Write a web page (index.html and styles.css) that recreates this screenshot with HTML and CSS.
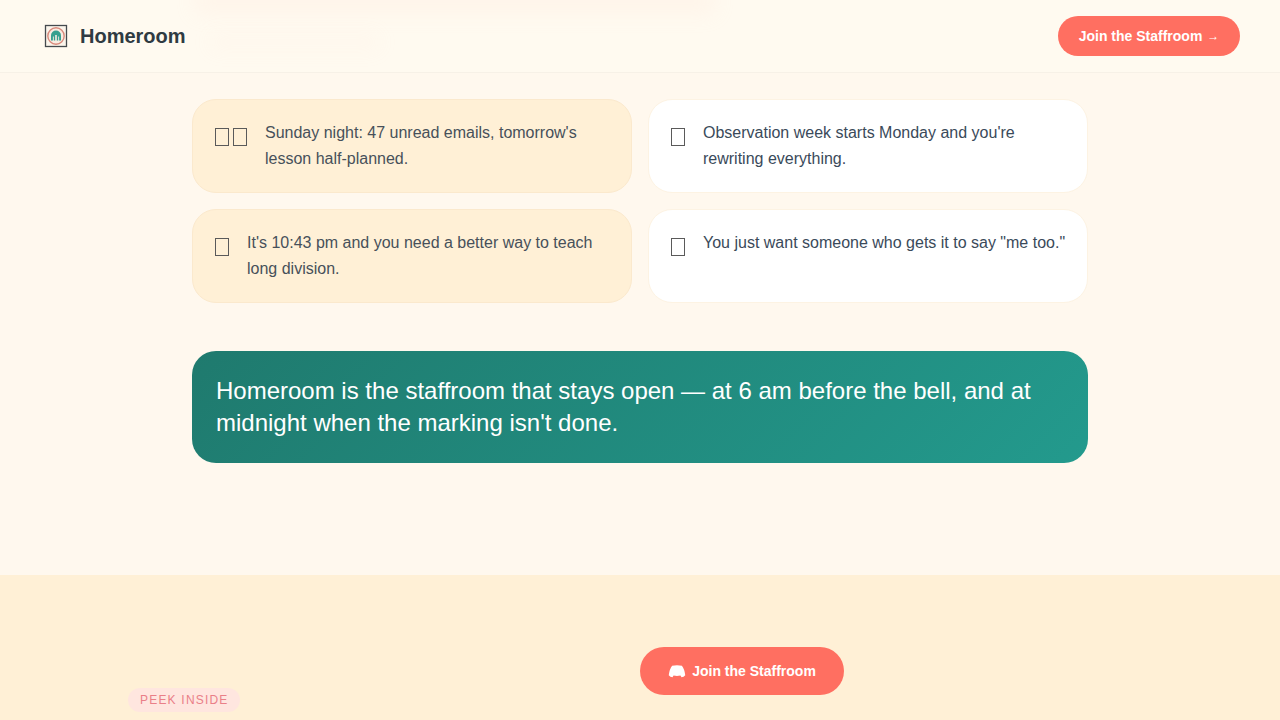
FILE: index.html
```html
<!DOCTYPE html>
<html lang="en">
<head>
    <meta charset="UTF-8">
    <meta name="viewport" content="width=device-width, initial-scale=1.0">
    <title>Homeroom</title>
    <link rel="stylesheet" href="styles.css">
</head>
<body>
    <header class="site-header">
        <div class="header-smudge smudge-top"></div>
        <div class="header-smudge smudge-low"></div>
        <a class="brand" href="#">
            <span class="brand-logo">
                <svg viewBox="0 0 24 24" width="24" height="24" aria-hidden="true">
                    <rect x="1.5" y="1.5" width="21" height="21" fill="#fbf5ec" stroke="#454a4e" stroke-width="1.3"/>
                    <circle cx="12" cy="12" r="8.2" fill="#f8ece2" stroke="#d98a7c" stroke-width="1.4"/>
                    <path d="M7 16.5V11.5a5 5 0 0 1 10 0V16.5Z" fill="#35a08f"/>
                    <path d="M11.2 17v-6h1.6v6ZM8.9 17v-4.5h.9V17ZM14.2 17v-4.5h.9V17Z" fill="#f8ece2"/>
                </svg>
            </span>
            <span class="brand-name">Homeroom</span>
        </a>
        <a class="btn btn-header" href="#">Join the Staffroom <span class="btn-arrow">→</span></a>
    </header>

    <main>
        <section class="intro">
            <div class="feelings">
                <div class="feeling feeling-warm">
                    <span class="feeling-icon"><i class="tofu"></i><i class="tofu"></i></span>
                    <p>Sunday night: 47 unread emails, tomorrow's lesson half-planned.</p>
                </div>
                <div class="feeling feeling-white">
                    <span class="feeling-icon"><i class="tofu"></i></span>
                    <p>Observation week starts Monday and you're rewriting everything.</p>
                </div>
                <div class="feeling feeling-warm">
                    <span class="feeling-icon"><i class="tofu"></i></span>
                    <p>It's 10:43 pm and you need a better way to teach long division.</p>
                </div>
                <div class="feeling feeling-white">
                    <span class="feeling-icon"><i class="tofu"></i></span>
                    <p>You just want someone who gets it to say "me too."</p>
                </div>
            </div>
            <div class="promise">
                Homeroom is the staffroom that stays open — at 6 am before the bell, and at midnight when the marking isn't done.
            </div>
        </section>

        <section class="peek">
            <div class="peek-grid">
                <div class="peek-left">
                    <span class="peek-badge">PEEK INSIDE</span>
                </div>
                <div class="peek-right">
                    <a class="btn btn-discord" href="#">
                        <svg viewBox="0 0 24 24" width="18" height="18" fill="currentColor" aria-hidden="true">
                            <path d="M5.5 5Q12 3.4 18.5 5Q21.8 9 23 17.5Q21 20 18 20.3L16.6 18Q12 19 7.4 18L6 20.3Q3 20 1 17.5Q2.2 9 5.5 5Z"/>
                        </svg>
                        Join the Staffroom
                    </a>
                </div>
            </div>
        </section>
    </main>
</body>
</html>
```

FILE: styles.css
```css
* {
    box-sizing: border-box;
}
html, body {
    height: 720px;
    overflow: hidden;
}
body {
    margin: 0;
    font-family: 'Liberation Sans', Arial, sans-serif;
    background: #fff8ee;
    color: #2d3436;
}
a {
    text-decoration: none;
}
.site-header {
    position: relative;
    height: 73px;
    padding: 0 40px;
    display: flex;
    justify-content: space-between;
    align-items: center;
    background: #fffaf0;
    border-bottom: 1px solid #f7f1e7;
    overflow: hidden;
}
.header-smudge {
    position: absolute;
    background: #ffdccf;
    filter: blur(10px);
}
.smudge-top {
    left: 195px;
    top: -12px;
    width: 520px;
    height: 26px;
    opacity: 0.18;
}
.smudge-low {
    left: 210px;
    top: 34px;
    width: 170px;
    height: 16px;
    opacity: 0.1;
}
.brand {
    position: relative;
    display: flex;
    align-items: center;
    gap: 8px;
    color: #2f3b42;
}
.brand-logo {
    width: 32px;
    height: 32px;
    display: flex;
    align-items: center;
    justify-content: center;
}
.brand-name {
    font-size: 20px;
    font-weight: 700;
}
.btn {
    position: relative;
    display: inline-flex;
    align-items: center;
    justify-content: center;
    border-radius: 999px;
    background: #ff6f61;
    color: #fff;
    font-weight: 700;
}
.btn-header {
    width: 182px;
    height: 40px;
    font-size: 14px;
    gap: 5px;
}
.btn-arrow {
    font-size: 12px;
    font-weight: 400;
}
.intro {
    height: 502px;
    padding-top: 26px;
}
.feelings {
    width: 896px;
    margin: 0 auto;
    display: grid;
    grid-template-columns: 1fr 1fr;
    gap: 16px;
}
.feeling {
    display: flex;
    gap: 16px;
    padding: 20px;
    border-radius: 24px;
    height: 94px;
}
.feeling p {
    margin: 0;
    font-size: 16px;
    line-height: 26px;
}
.feeling-warm {
    background: #fff0d6;
    border: 1px solid #fbe9cd;
}
.feeling-warm p {
    color: #47505a;
}
.feeling-white {
    background: #fff;
    border: 1px solid #fdf3e3;
}
.feeling-white p {
    color: #3a4a5a;
}
.feeling-icon {
    display: flex;
    flex-shrink: 0;
    padding-top: 8px;
}
.tofu {
    display: block;
    width: 14px;
    height: 18px;
    margin: 0 2px;
    border: 1px solid #5a5a5a;
}
.promise {
    width: 896px;
    margin: 48px auto 0;
    padding: 24px;
    border-radius: 24px;
    background: linear-gradient(135deg, #1f7a6e, #239a8d);
    color: #fff;
    font-size: 24px;
    line-height: 32px;
}
.peek {
    height: 145px;
    padding-top: 72px;
    background: #fff0d6;
}
.peek-grid {
    width: 1024px;
    margin: 0 auto;
    display: grid;
    grid-template-columns: 1fr 1fr;
}
.peek-left {
    padding-top: 41px;
}
.peek-badge {
    display: inline-block;
    padding: 0 11px 0 12px;
    height: 24px;
    line-height: 24px;
    border-radius: 999px;
    background: #ffe6df;
    color: #ea7f88;
    font-size: 12px;
    letter-spacing: 1.2px;
}
.btn-discord {
    width: 204px;
    height: 48px;
    gap: 6px;
    font-size: 14px;
}
```
